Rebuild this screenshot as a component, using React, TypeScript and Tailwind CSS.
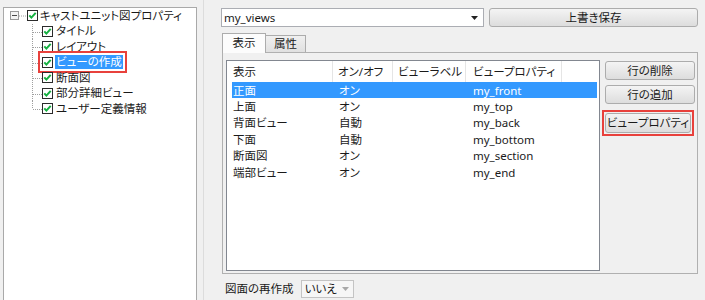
import type { ReactNode } from 'react';

const font = "[font-family:'Noto_Sans','Noto_Sans_CJK_JP',sans-serif] [font-feature-settings:'palt']";

function CheckIcon() {
  return (
    <svg width="11" height="11" viewBox="0 0 11 11" className="shrink-0">
      <rect x="0.5" y="0.5" width="10" height="10" fill="#fff" stroke="#2b2b2b" />
      <path d="M2.3 5.3 L4.4 7.6 L8.7 2.9" stroke="#14b040" strokeWidth="2" fill="none" />
    </svg>
  );
}

function ExpandBox() {
  return (
    <svg width="9" height="9" viewBox="0 0 9 9" className="shrink-0">
      <rect x="0.5" y="0.5" width="8" height="8" fill="#f4f4f4" stroke="#9a9a9a" />
      <path d="M2 4.5 H7" stroke="#4a4a4a" />
    </svg>
  );
}

// dotted tree connector for child rows
function Connector({ last }: { last?: boolean }) {
  return (
    <svg width="10" height="15.5" viewBox="0 0 10 15.5" className="shrink-0">
      <path d={last ? 'M0.5 0 V8' : 'M0.5 0 V15.5'} stroke="#a0a0a0" strokeDasharray="1 1" />
      <path d="M1 8.5 H10" stroke="#a0a0a0" strokeDasharray="1 1" />
    </svg>
  );
}

const children = ['タイトル', 'レイアウト', 'ビューの作成', '断面図', '部分詳細ビュー', 'ユーザー定義情報'];

function Tree() {
  return (
    <div className="flex-1 bg-white border border-b-0 border-[#a9a9a9] text-[11.5px] text-[#1a1a1a]">
      <div className="flex items-center h-[15.5px] pl-[6px]">
        <ExpandBox />
        <svg width="8" height="2" className="shrink-0">
          <path d="M0 1 H8" stroke="#a0a0a0" strokeDasharray="1 1" />
        </svg>
        <CheckIcon />
        <span className="ml-[2px] leading-none whitespace-nowrap">キャストユニット図プロパティ</span>
      </div>
      {children.map((c, i) => {
        const selected = c === 'ビューの作成';
        return (
          <div key={c} className="flex items-center h-[15.5px] pl-[28px]">
            <Connector last={i === children.length - 1} />
            <div
              className={`flex items-center ${selected ? 'outline-2 outline-[#e8413c] outline-offset-[2px]' : ''}`}
            >
              <CheckIcon />
              <span
                className={`ml-[2px] px-[1px] leading-[14px] whitespace-nowrap ${selected ? 'bg-[#3399ff] text-white' : ''}`}
              >
                {c}
              </span>
            </div>
          </div>
        );
      })}
    </div>
  );
}

function Button({ children, className = '' }: { children: ReactNode; className?: string }) {
  return (
    <div
      className={`flex items-center justify-center border border-[#acacac] rounded-[3px] bg-linear-to-b from-[#f4f4f4] to-[#dddddd] text-[11.5px] text-[#1a1a1a] ${className}`}
    >
      {children}
    </div>
  );
}

const rows = [
  ['正面', 'オン', 'my_front'],
  ['上面', 'オン', 'my_top'],
  ['背面ビュー', '自動', 'my_back'],
  ['下面', '自動', 'my_bottom'],
  ['断面図', 'オン', 'my_section'],
  ['端部ビュー', 'オン', 'my_end'],
];

function ViewList() {
  return (
    <div className="w-[374px] h-[211px] bg-white border border-[#828790] pl-[5px] pr-[2px] text-[11.5px] text-[#1a1a1a]">
      <div className="flex h-[21px] items-center">
        <div className="w-[101px] h-full flex items-center pl-[1px] border-r border-[#e5e5e5]">表示</div>
        <div className="w-[60px] h-full flex items-center pl-[5px] border-r border-[#e5e5e5]">オン/オフ</div>
        <div className="w-[73px] h-full flex items-center pl-[5px] border-r border-[#e5e5e5]">ビューラベル</div>
        <div className="w-[96px] h-full flex items-center pl-[7px] border-r border-[#e5e5e5]">ビュープロパティ</div>
      </div>
      {rows.map((r, i) => (
        <div
          key={r[0]}
          className={`flex items-center h-[16.4px] ${i === 0 ? 'bg-[#3399ff] text-white' : ''}`}
        >
          <div className="w-[101px] pl-[1px]">{r[0]}</div>
          <div className="w-[60px] pl-[6px]">{r[1]}</div>
          <div className="w-[73px]" />
          <div className="pl-[7px]">{r[2]}</div>
        </div>
      ))}
    </div>
  );
}

export default function App() {
  return (
    <div className={`w-[705px] h-[300px] bg-[#f0f0f0] flex overflow-hidden ${font}`}>
      {/* left tree pane */}
      <div className="w-[197px] pl-[3px] pt-[7px] flex flex-col">
        <Tree />
      </div>
      {/* splitter */}
      <div className="w-[6px]" />
      <div className="w-px bg-[#dcdcdc]" />
      <div className="w-[18px]" />

      {/* right pane */}
      <div className="w-[476px] flex flex-col pt-[8px]">
        <div className="flex h-[19px] gap-[5px] -ml-px">
          <div className="w-[263px] bg-white border border-[#abadb3] flex items-center pl-[2px] pr-[5px] text-[11.5px] text-[#1a1a1a]">
            <span className="flex-1">my_views</span>
            <svg width="7" height="4" viewBox="0 0 7 4">
              <path d="M0 0 H7 L3.5 4 Z" fill="#222" />
            </svg>
          </div>
          <Button className="flex-1">上書き保存</Button>
        </div>

        {/* tabs */}
        <div className="flex items-end h-[20px] mt-[5px] text-[11.5px] text-[#1a1a1a]">
          <div className="w-[44px] h-[20px] border border-b-0 border-[#acacac] bg-[#fcfcfc] flex items-center justify-center relative z-10 -mb-px pb-px">
            表示
          </div>
          <div className="w-[40px] h-[17px] border border-b-0 border-l-0 border-[#acacac] bg-linear-to-b from-[#f0f0f0] to-[#e0e0e0] flex items-center justify-center">
            属性
          </div>
        </div>
        <div className="h-[222px] border border-[#b0b0b0] flex gap-[5px] pl-[3px] pt-[7px]">
          <ViewList />
          <div className="flex flex-col w-[90px] pt-[1px]">
            <Button className="h-[19px]">行の削除</Button>
            <Button className="h-[19px] mt-[5px]">行の追加</Button>
            <div className="mt-[6px] w-[92px] -ml-[3px] border-2 border-[#e8413c] p-[1px]">
              <Button className="h-[20px]">ビュープロパティ</Button>
            </div>
          </div>
        </div>

        {/* bottom */}
        <div className="flex items-center gap-[7px] mt-[6px] pl-[3px] text-[11.5px] text-[#1a1a1a]">
          <span>図面の再作成</span>
          <div className="w-[53px] h-[18px] border border-[#c4c4c4] bg-[#f6f6f6] flex items-center pl-[3px] pr-[4px]">
            <span className="flex-1">いいえ</span>
            <svg width="7" height="4" viewBox="0 0 7 4">
              <path d="M0 0 H7 L3.5 4 Z" fill="#a8a8a8" />
            </svg>
          </div>
        </div>
      </div>
    </div>
  );
}
